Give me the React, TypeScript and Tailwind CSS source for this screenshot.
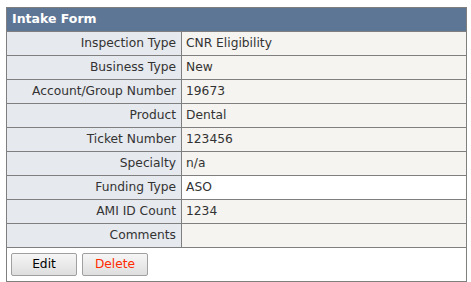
const rows: { label: string; value: string; white?: boolean }[] = [
  { label: "Inspection Type", value: "CNR Eligibility" },
  { label: "Business Type", value: "New" },
  { label: "Account/Group Number", value: "19673" },
  { label: "Product", value: "Dental" },
  { label: "Ticket Number", value: "123456" },
  { label: "Specialty", value: "n/a" },
  { label: "Funding Type", value: "ASO", white: true },
  { label: "AMI ID Count", value: "1234" },
  { label: "Comments", value: "" },
];

export default function App() {
  return (
    <div className="bg-white w-[471px] h-[282px] pt-[7px] pl-[6px] font-['DejaVu_Sans',Verdana,sans-serif] text-[12.25px] text-[#333]">
      <table className="w-[461px] border-collapse border border-[#7f7f7f]">
        <thead>
          <tr>
            <th
              colSpan={2}
              className="h-[24px] bg-[#5e7695] text-white text-left font-bold text-[12.5px] px-[5px] border border-[#7f7f7f]"
            >
              Intake Form
            </th>
          </tr>
        </thead>
        <tbody>
          {rows.map((r) => (
            <tr key={r.label}>
              <td className="h-[24px] w-[175px] bg-[#e6e9ee] text-right pr-[5px] border border-[#7f7f7f] whitespace-nowrap">
                {r.label}
              </td>
              <td
                className={
                  "h-[24px] pl-[4px] border border-[#7f7f7f] " +
                  (r.white ? "bg-white" : "bg-[#f5f4f0]")
                }
              >
                {r.value}
              </td>
            </tr>
          ))}
          <tr>
            <td colSpan={2} className="h-[34px] px-[4px] border border-[#7f7f7f] bg-white">
              <div className="flex gap-[5px]">
                <button className="w-[66px] h-[23px] rounded-[2px] border border-[#a0a0a0] bg-gradient-to-b from-[#f6f6f6] to-[#dedede] text-black text-[12.25px]">
                  Edit
                </button>
                <button className="w-[66px] h-[23px] rounded-[2px] border border-[#a0a0a0] bg-gradient-to-b from-[#f6f6f6] to-[#dedede] text-[#ff2a00] text-[12.25px]">
                  Delete
                </button>
              </div>
            </td>
          </tr>
        </tbody>
      </table>
    </div>
  );
}
